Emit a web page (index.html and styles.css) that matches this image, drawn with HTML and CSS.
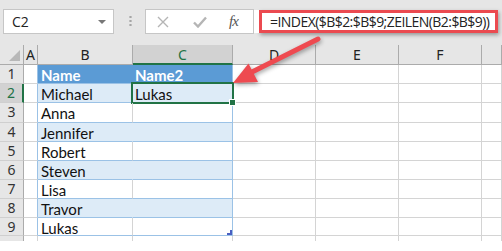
FILE: index.html
```html
<!DOCTYPE html>
<html>
<head>
  <title>INDEX ZEILEN</title>
  <link rel="stylesheet" href="styles.css">
</head>
<body>
  <div class="toolbar">
    <div class="namebox"><span>C2</span><i class="caret"></i></div>
    <div class="grip"></div>
    <div class="fxtools">
      <svg class="ico-x" width="12" height="12" viewBox="0 0 12 12"><path d="M1 1L11 11M11 1L1 11"/></svg>
      <svg class="ico-ok" width="14" height="12" viewBox="0 0 14 12"><path d="M1 6.5L5 10.5L13 1.5"/></svg>
      <span class="fx">fx</span>
    </div>
    <div class="formula">=INDEX($B$2:$B$9;ZEILEN(B2:$B$9))</div>
  </div>

  <div class="sheet">
    <!-- column headers -->
    <div class="c h corner"><i></i></div>
    <div class="c h">A</div>
    <div class="c h">B</div>
    <div class="c h sel">C</div>
    <div class="c h">D</div>
    <div class="c h">E</div>
    <div class="c h">F</div>
    <div class="c h"></div>

    <!-- row 1 -->
    <div class="c r">1</div>
    <div class="c a"></div>
    <div class="c tb th">Name</div>
    <div class="c tc th">Name2</div>
    <div class="c"></div><div class="c"></div><div class="c"></div><div class="c"></div>

    <!-- row 2 -->
    <div class="c r sel">2</div>
    <div class="c a"></div>
    <div class="c tb band">Michael</div>
    <div class="c tc band active">Lukas</div>
    <div class="c"></div><div class="c"></div><div class="c"></div><div class="c"></div>

    <!-- row 3 -->
    <div class="c r">3</div>
    <div class="c a"></div>
    <div class="c tb">Anna</div>
    <div class="c tc"></div>
    <div class="c"></div><div class="c"></div><div class="c"></div><div class="c"></div>

    <!-- row 4 -->
    <div class="c r">4</div>
    <div class="c a"></div>
    <div class="c tb band">Jennifer</div>
    <div class="c tc band"></div>
    <div class="c"></div><div class="c"></div><div class="c"></div><div class="c"></div>

    <!-- row 5 -->
    <div class="c r">5</div>
    <div class="c a"></div>
    <div class="c tb">Robert</div>
    <div class="c tc"></div>
    <div class="c"></div><div class="c"></div><div class="c"></div><div class="c"></div>

    <!-- row 6 -->
    <div class="c r">6</div>
    <div class="c a"></div>
    <div class="c tb band">Steven</div>
    <div class="c tc band"></div>
    <div class="c"></div><div class="c"></div><div class="c"></div><div class="c"></div>

    <!-- row 7 -->
    <div class="c r">7</div>
    <div class="c a"></div>
    <div class="c tb">Lisa</div>
    <div class="c tc"></div>
    <div class="c"></div><div class="c"></div><div class="c"></div><div class="c"></div>

    <!-- row 8 -->
    <div class="c r">8</div>
    <div class="c a"></div>
    <div class="c tb band">Travor</div>
    <div class="c tc band"></div>
    <div class="c"></div><div class="c"></div><div class="c"></div><div class="c"></div>

    <!-- row 9 -->
    <div class="c r">9</div>
    <div class="c a"></div>
    <div class="c tb">Lukas</div>
    <div class="c tc last"><i class="resize"></i></div>
    <div class="c"></div><div class="c"></div><div class="c"></div><div class="c"></div>

    <!-- row 10 (cut off) -->
    <div class="c r cut"></div>
    <div class="c cut"></div><div class="c cut"></div><div class="c cut"></div>
    <div class="c cut"></div><div class="c cut"></div><div class="c cut"></div><div class="c cut"></div>
  </div>

  <svg class="arrow" width="502" height="251" viewBox="0 0 502 251">
    <path class="shaft" d="M318 39L250 73"/>
    <polygon class="head" points="233,83 248.5,63.5 258,82"/>
  </svg>
</body>
</html>
```

FILE: styles.css
```css
body {
  margin: 0;
  background: #fff;
  font-family: "Open Sans", "Noto Sans", sans-serif;
  position: relative;
  width: 502px;
  height: 251px;
  overflow: hidden;
}

/* formula bar */
.toolbar {
  height: 45px;
  box-sizing: border-box;
  padding-top: 9px;
  background: #e6e6e6;
  display: flex;
  align-items: flex-start;
}

.namebox {
  margin-left: 3px;
  width: 111px;
  height: 25px;
  box-sizing: border-box;
  background: #fff;
  border: 1px solid #c6c6c6;
  display: flex;
  align-items: center;
  justify-content: space-between;
  padding: 0 7px 0 8px;
  font-size: 14px;
  color: #222;
}

.caret {
  width: 0;
  height: 0;
  border-left: 4px solid transparent;
  border-right: 4px solid transparent;
  border-top: 4px solid #777;
}

.grip {
  margin: 6px 13px 0 15px;
  width: 3px;
  height: 12px;
  background: radial-gradient(circle, #a6a6a6 1px, transparent 1.3px) 0 0 / 3px 4px;
}

.fxtools {
  width: 109px;
  height: 25px;
  box-sizing: border-box;
  background: #fff;
  border: 1px solid #c6c6c6;
  display: flex;
  align-items: center;
  padding-left: 11px;
  gap: 0;
}

.ico-x path {
  fill: none;
  stroke: #b5b5b5;
  stroke-width: 1.4;
}

.ico-ok {
  margin-left: 24px;
}

.ico-ok path {
  fill: none;
  stroke: #b5b5b5;
  stroke-width: 2.4;
}

.fx {
  margin-left: 22px;
  font-family: "Liberation Serif", serif;
  font-style: italic;
  font-size: 15px;
  color: #555;
  letter-spacing: -1px;
}

.formula {
  margin: 1px 4px 0 5px;
  flex: 1;
  height: 23px;
  box-sizing: border-box;
  border: 3px solid #eb4a50;
  background: #fff;
  box-shadow: -5px 0 0 #fff, 1px 2px 4px rgba(0, 0, 0, 0.35);
  padding-left: 8px;
  font-size: 14px;
  line-height: 17px;
  color: #222;
  letter-spacing: -0.55px;
  white-space: nowrap;
}

/* sheet */
.sheet {
  display: grid;
  grid-template-columns: 24px 14px 95px 100px 83px 83px 83px 1fr;
  grid-template-rows: 20px 19px 19px 20px 19px 19px 19px 19px 19px 18px 5px;
}

.c {
  box-sizing: border-box;
  border-right: 1px solid #d4d4d4;
  border-bottom: 1px solid #d4d4d4;
  font-family: "Lato", "Liberation Sans", sans-serif;
  font-size: 15px;
  line-height: 18px;
  color: #111;
  padding-left: 3px;
  white-space: nowrap;
  position: relative;
}

.h {
  background: #e6e6e6;
  border-right-color: #ababab;
  border-bottom-color: #ababab;
  font-family: "Noto Sans", sans-serif;
  font-size: 14px;
  line-height: 19px;
  text-align: center;
  padding-left: 0;
  color: #222;
}

.h.sel {
  background: #d2d2d2;
  color: #217346;
  border-bottom: 2px solid #217346;
}

.corner {
  display: flex;
  justify-content: flex-end;
  align-items: flex-end;
  padding: 0 3px 3px 0;
}

.corner i {
  width: 11px;
  height: 11px;
  background: #b8b8b8;
  clip-path: polygon(100% 0, 100% 100%, 0 100%);
}

.r {
  background: #e6e6e6;
  border-right-color: #ababab;
  border-bottom-color: #cfcfcf;
  font-family: "Noto Sans", sans-serif;
  font-size: 14px;
  text-align: center;
  padding-left: 0;
  color: #333;
}

.r.sel {
  background: #d2d2d2;
  color: #217346;
  border-right: 2px solid #217346;
}

.cut {
  border-bottom: none;
}

/* table */
.a {
  border-right-color: #9bc2e6;
}

.tb,
.tc {
  border-bottom-color: #9bc2e6;
  padding-top: 1px;
}

.tc {
  border-right-color: #9bc2e6;
  padding-left: 2px;
}

.th {
  background: #5b9bd5;
  color: #fff;
  font-weight: bold;
}

.tb.th {
  border-right-color: #5b9bd5;
}

.band {
  background: #ddebf7;
}

.tb.band {
  border-right-color: #ddebf7;
}

.active::after {
  content: "";
  position: absolute;
  left: -2px;
  top: -2px;
  right: -2px;
  bottom: -2px;
  border: 2px solid #217346;
}

.active::before {
  content: "";
  position: absolute;
  right: -4px;
  bottom: -4px;
  width: 5px;
  height: 5px;
  background: #217346;
  border: 1px solid #fff;
  z-index: 1;
}

.resize {
  position: absolute;
  right: 0;
  bottom: 0;
  width: 5px;
  height: 5px;
  background: #4a5fc1;
  clip-path: polygon(100% 0, 100% 100%, 0 100%, 0 60%, 60% 60%, 60% 0);
}

/* callout arrow */
.arrow {
  position: absolute;
  left: 0;
  top: 0;
  pointer-events: none;
  filter: drop-shadow(1px 2px 2px rgba(0, 0, 0, 0.35));
}

.shaft {
  fill: none;
  stroke: #ee4a50;
  stroke-width: 5;
  stroke-linecap: round;
}

.head {
  fill: #ee4a50;
}
```
